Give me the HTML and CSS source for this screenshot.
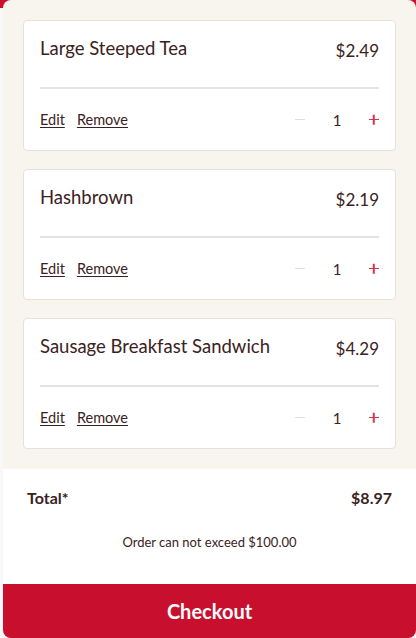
FILE: index.html
```html
<!DOCTYPE html>
<html lang="en">
<head>
  <meta charset="UTF-8">
  <meta name="viewport" content="width=device-width, initial-scale=1.0">
  <title>Your Order</title>
  <link rel="stylesheet" href="styles.css">
</head>
<body>
  <div class="sheet">
    <div class="cart-items">
      <div class="cart-item">
        <div class="item-header">
          <span class="item-name">Large Steeped Tea</span>
          <span class="item-price">$2.49</span>
        </div>
        <div class="item-actions">
          <div class="links">
            <a href="#">Edit</a>
            <a href="#">Remove</a>
          </div>
          <div class="qty">
            <button class="qty-btn minus" aria-label="Decrease"></button>
            <span class="qty-value">1</span>
            <button class="qty-btn plus" aria-label="Increase"></button>
          </div>
        </div>
      </div>

      <div class="cart-item">
        <div class="item-header">
          <span class="item-name">Hashbrown</span>
          <span class="item-price">$2.19</span>
        </div>
        <div class="item-actions">
          <div class="links">
            <a href="#">Edit</a>
            <a href="#">Remove</a>
          </div>
          <div class="qty">
            <button class="qty-btn minus" aria-label="Decrease"></button>
            <span class="qty-value">1</span>
            <button class="qty-btn plus" aria-label="Increase"></button>
          </div>
        </div>
      </div>

      <div class="cart-item">
        <div class="item-header">
          <span class="item-name">Sausage Breakfast Sandwich</span>
          <span class="item-price">$4.29</span>
        </div>
        <div class="item-actions">
          <div class="links">
            <a href="#">Edit</a>
            <a href="#">Remove</a>
          </div>
          <div class="qty">
            <button class="qty-btn minus" aria-label="Decrease"></button>
            <span class="qty-value">1</span>
            <button class="qty-btn plus" aria-label="Increase"></button>
          </div>
        </div>
      </div>
    </div>

    <div class="summary">
      <div class="total-row">
        <span>Total*</span>
        <span>$8.97</span>
      </div>
      <p class="limit-note">Order can not exceed $100.00</p>
    </div>

    <button class="checkout-btn">Checkout</button>
  </div>
</body>
</html>
```

FILE: styles.css
```css
body {
  margin: 0;
  height: 638px;
  overflow: hidden;
  font-family: Lato, "Noto Sans", sans-serif;
  color: #3b2222;
  background: linear-gradient(#c8102e 0, #c8102e 8px, #f8f8f8 8px);
}

.sheet {
  margin-left: 3px;
  height: 638px;
  display: flex;
  flex-direction: column;
  background-color: #f8f4ee;
  border-radius: 8px;
  overflow: hidden;
}

.cart-items {
  display: flex;
  flex-direction: column;
  gap: 18px;
  padding: 20px 20px 20px;
}

.cart-item {
  background-color: #fff;
  border: 1px solid #e4e2df;
  border-radius: 4px;
  padding: 16px 16px 0;
}

.item-header {
  height: 50px;
  display: flex;
  justify-content: space-between;
  align-items: flex-start;
  border-bottom: 2px solid #e3e3e3;
}

.item-name {
  font-size: 18.5px;
  line-height: 22px;
}

.item-price {
  font-size: 17px;
  line-height: 22px;
  margin-top: 3px;
}

.item-actions {
  height: 61px;
  display: flex;
  justify-content: space-between;
  align-items: center;
}

.links {
  display: flex;
  gap: 12px;
}

.links a {
  font-size: 14.5px;
  color: #3b2222;
  text-decoration: underline;
  text-underline-offset: 2px;
}

.qty {
  display: flex;
  align-items: center;
  gap: 27px;
}

.qty-value {
  font-size: 15px;
  width: 10px;
  text-align: center;
}

.qty-btn {
  position: relative;
  width: 10px;
  height: 10px;
  padding: 0;
  border: none;
  background: none;
  cursor: pointer;
}

.qty-btn::before,
.qty-btn.plus::after {
  content: "";
  position: absolute;
  left: 0;
  top: 4px;
  width: 10px;
  height: 1.5px;
}

.qty-btn.minus::before {
  background-color: #dedede;
}

.qty-btn.plus::before,
.qty-btn.plus::after {
  background-color: #d3344f;
}

.qty-btn.plus::after {
  transform: rotate(90deg);
}

.summary {
  flex: 1;
  background-color: #fff;
  padding: 17px 24px 0;
}

.total-row {
  display: flex;
  justify-content: space-between;
  font-size: 16px;
  font-weight: bold;
  line-height: 24px;
}

.limit-note {
  margin: 24px 0 0;
  font-size: 13px;
  text-align: center;
}

.checkout-btn {
  height: 54px;
  border: none;
  background-color: #c8102e;
  color: #fff;
  font-family: inherit;
  font-size: 20px;
  font-weight: bold;
  cursor: pointer;
}
```
